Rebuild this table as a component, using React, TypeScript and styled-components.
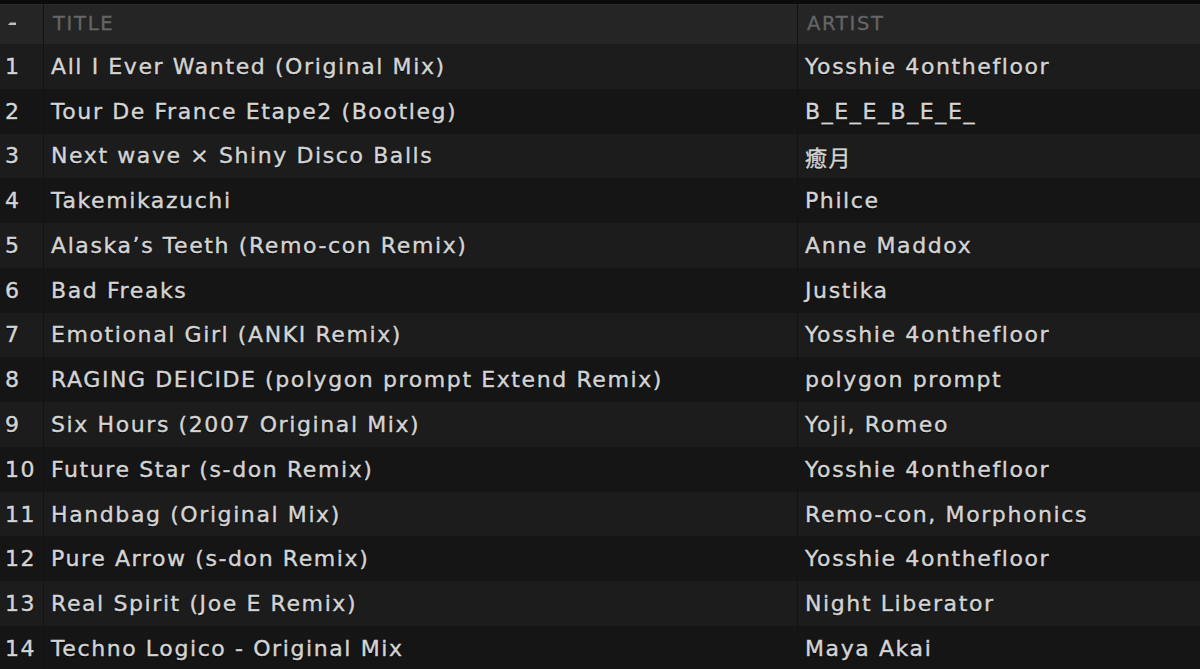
import React from "react";
import styled, { createGlobalStyle } from "styled-components";

const Global = createGlobalStyle`
  html, body { margin: 0; padding: 0; background: #0b0b0b; overflow: hidden; }
  body { font-family: "DejaVu Sans", "Noto Sans CJK JP", sans-serif; }
`;

const Screen = styled.div`
  width: 1200px;
  height: 669px;
  overflow: hidden;
  background: #0b0b0b;
  padding-top: 4px;
  box-sizing: border-box;
`;

const Grid = styled.div`
  display: grid;
  grid-template-columns: 43px 753px 1fr;
  column-gap: 1px;
  background: #121212;
`;

const HeadCell = styled.div`
  height: 40px;
  background: #252525;
  border-top: 1px solid #2a2a2a;
  box-sizing: border-box;
  display: flex;
  align-items: center;
  padding-left: 9px;
  padding-bottom: 2px;
  color: #656565;
  font-family: "DejaVu Sans", sans-serif;
  font-size: 19.5px;
  letter-spacing: 1.7px;
  -webkit-text-stroke: 0.3px #656565;
`;

const Cell = styled.div<{ $odd: boolean; $num?: boolean }>`
  height: 44.77px;
  background: ${(p) => (p.$odd ? "#1c1c1c" : "#151515")};
  display: flex;
  align-items: center;
  padding-left: ${(p) => (p.$num ? "5px" : "7px")};
  color: #d4d4d4;
  font-size: 22px;
  letter-spacing: 1.6px;
  -webkit-text-stroke: 0.4px #d4d4d4;
  white-space: nowrap;
  overflow: hidden;
  text-shadow: 0 1px 1px #000;
  font-family: "DejaVu Sans", "Noto Sans CJK JP", sans-serif;
`;

const SortIcon = styled.svg`
  display: block;
  margin-left: -2px;
`;

const tracks: [string, string][] = [
  ["All I Ever Wanted (Original Mix)", "Yosshie 4onthefloor"],
  ["Tour De France Etape2 (Bootleg)", "B_E_E_B_E_E_"],
  ["Next wave × Shiny Disco Balls", "癒月"],
  ["Takemikazuchi", "Philce"],
  ["Alaska’s Teeth (Remo-con Remix)", "Anne Maddox"],
  ["Bad Freaks", "Justika"],
  ["Emotional Girl (ANKI Remix)", "Yosshie 4onthefloor"],
  ["RAGING DEICIDE (polygon prompt Extend Remix)", "polygon prompt"],
  ["Six Hours (2007 Original Mix)", "Yoji, Romeo"],
  ["Future Star (s-don Remix)", "Yosshie 4onthefloor"],
  ["Handbag (Original Mix)", "Remo-con, Morphonics"],
  ["Pure Arrow (s-don Remix)", "Yosshie 4onthefloor"],
  ["Real Spirit (Joe E Remix)", "Night Liberator"],
  ["Techno Logico - Original Mix", "Maya Akai"],
];

export default function App() {
  return (
    <>
      <Global />
      <Screen>
        <Grid>
          <HeadCell>
            <SortIcon width="10" height="6" viewBox="0 0 10 6">
              <path d="M1 4 L3 1.5 L9 1.5 L9 4 Z" fill="#bdbdbd" />
            </SortIcon>
          </HeadCell>
          <HeadCell>TITLE</HeadCell>
          <HeadCell>ARTIST</HeadCell>
          {tracks.map(([title, artist], i) => (
            <React.Fragment key={i}>
              <Cell $odd={i % 2 === 0} $num>{i + 1}</Cell>
              <Cell $odd={i % 2 === 0}>{title}</Cell>
              <Cell $odd={i % 2 === 0}>{artist}</Cell>
            </React.Fragment>
          ))}
        </Grid>
      </Screen>
    </>
  );
}
